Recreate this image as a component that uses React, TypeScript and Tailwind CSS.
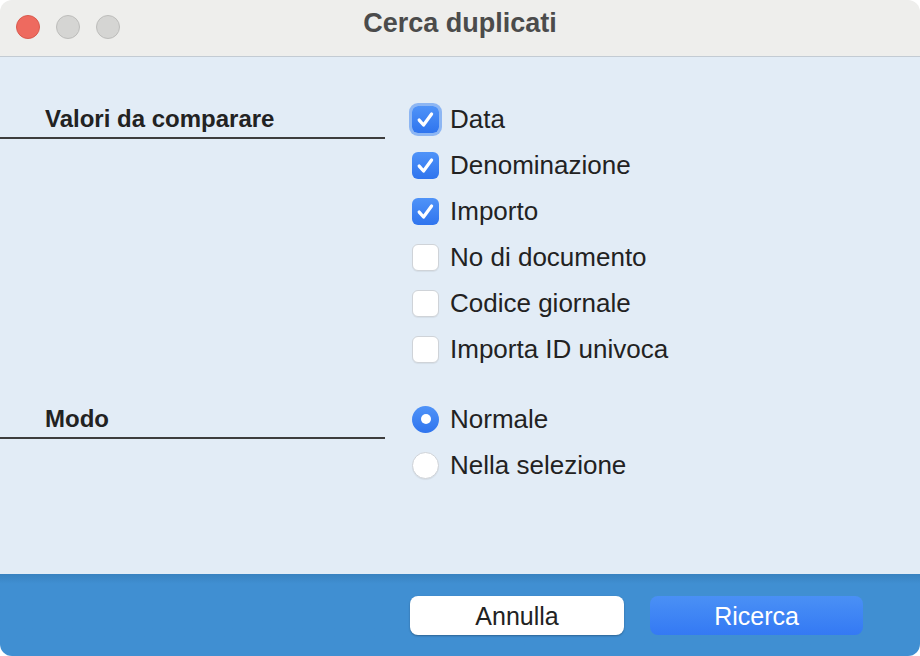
import React, { useState } from 'react';

const font = { fontFamily: '"Liberation Sans", Arial, sans-serif' };

const Check = ({ checked, focused }: { checked: boolean; focused?: boolean }) => (
  <span
    className={
      'flex h-[27px] w-[27px] shrink-0 items-center justify-center rounded-[6px] ' +
      (checked
        ? 'bg-gradient-to-b from-[#4f93f8] to-[#2f74ee] '
        : 'border border-[#cfd3d8] bg-white shadow-[0_1px_1px_rgba(0,0,0,0.06)] ') +
      (focused ? 'ring-[3px] ring-[#8db6f3]' : '')
    }
  >
    {checked && (
      <svg width="23" height="23" viewBox="0 0 20 20" fill="none">
        <path d="M4.5 10.5 L8.3 14.8 L15.3 5.2" stroke="white" strokeWidth="2.8" strokeLinecap="round" strokeLinejoin="round" />
      </svg>
    )}
  </span>
);

const Radio = ({ selected }: { selected: boolean }) => (
  <span
    className={
      'flex h-[27px] w-[27px] shrink-0 items-center justify-center rounded-full ' +
      (selected
        ? 'bg-gradient-to-b from-[#4f93f8] to-[#2f74ee]'
        : 'border border-[#cfd3d8] bg-white shadow-[0_1px_1px_rgba(0,0,0,0.06)]')
    }
  >
    {selected && <span className="h-[10px] w-[10px] rounded-full bg-white" />}
  </span>
);

const SectionLabel = ({ text }: { text: string }) => (
  <div className="border-b-2 border-[#3d3d3d] pb-[4px] pl-[45px] pt-[9px]">
    <div className="text-[24px] font-bold leading-[28px] text-[#222]">{text}</div>
  </div>
);

const App: React.FC = () => {
  const [values, setValues] = useState([true, true, true, false, false, false]);
  const [mode, setMode] = useState(0);

  const labels = ['Data', 'Denominazione', 'Importo', 'No di documento', 'Codice giornale', 'Importa ID univoca'];
  const modes = ['Normale', 'Nella selezione'];

  return (
    <div className="h-[656px] w-[920px] bg-white" style={font}>
      <div className="flex h-full flex-col overflow-hidden rounded-[12px]">
        <div className="relative flex h-[57px] shrink-0 items-center justify-center border-b border-[#c3cbd3] bg-[#eeeeec]">
          <div className="absolute left-[16px] top-[15px] flex gap-[16px]">
            <span className="h-[24px] w-[24px] rounded-full border border-[#d95a4e] bg-[#ee6a5f]" />
            <span className="h-[24px] w-[24px] rounded-full border border-[#bdbdbb] bg-[#d5d5d3]" />
            <span className="h-[24px] w-[24px] rounded-full border border-[#bdbdbb] bg-[#d5d5d3]" />
          </div>
          <div className="pb-[10px] text-[27px] font-bold text-[#4b4b4b]">Cerca duplicati</div>
        </div>

        <div className="flex-1 bg-[#e2ecf6] pt-[39px]">
          <div className="grid grid-cols-[385px_1fr] gap-x-[27px]">
            <div>
              <SectionLabel text="Valori da comparare" />
            </div>
            <div className="flex flex-col">
              {labels.map((l, i) => (
                <label
                  key={l}
                  className="flex h-[46px] cursor-pointer items-center gap-[11px]"
                  onClick={() => setValues(values.map((v, j) => (j === i ? !v : v)))}
                >
                  <Check checked={values[i]} focused={i === 0} />
                  <span className="text-[26px] leading-none text-[#222]">{l}</span>
                </label>
              ))}
            </div>
          </div>

          <div className="mt-[24px] grid grid-cols-[385px_1fr] gap-x-[27px]">
            <div>
              <SectionLabel text="Modo" />
            </div>
            <div className="flex flex-col">
              {modes.map((m, i) => (
                <label
                  key={m}
                  className="flex h-[46px] cursor-pointer items-center gap-[11px]"
                  onClick={() => setMode(i)}
                >
                  <Radio selected={mode === i} />
                  <span className="text-[26px] leading-none text-[#222]">{m}</span>
                </label>
              ))}
            </div>
          </div>
        </div>

        <div className="flex h-[82px] shrink-0 items-center justify-end gap-[26px] bg-gradient-to-b from-[#3882c0] via-[#408fd2] via-[12%] to-[#408fd2] pr-[57px]">
          <button className="h-[39px] w-[214px] rounded-[8px] bg-white pt-[2px] text-[25px] text-[#222] shadow-[0_1px_2px_rgba(0,0,0,0.3)]">
            Annulla
          </button>
          <button className="h-[39px] w-[213px] rounded-[8px] bg-gradient-to-b from-[#4a90f5] to-[#3479f4] pt-[2px] text-[25px] text-white">
            Ricerca
          </button>
        </div>
      </div>
    </div>
  );
};

export default App;
